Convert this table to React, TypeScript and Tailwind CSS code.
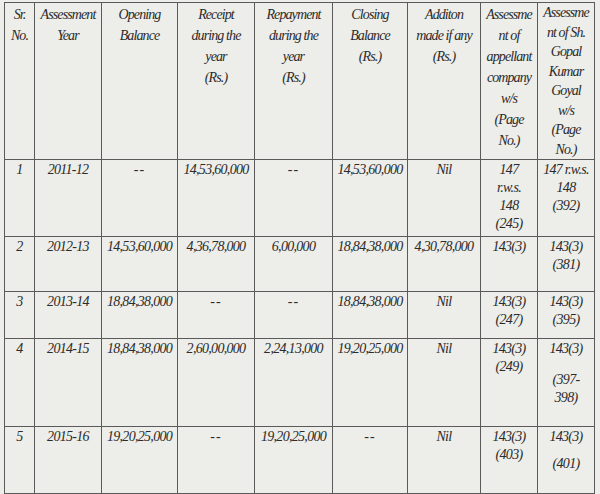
import React from 'react';

type Row = {
  sr: string;
  year: string;
  opening: string;
  receipt: string;
  repayment: string;
  closing: string;
  addition: string;
  company: React.ReactNode;
  goyal: React.ReactNode;
  height: string;
};

const rows: Row[] = [
  {
    sr: '1',
    year: '2011-12',
    opening: '--',
    receipt: '14,53,60,000',
    repayment: '--',
    closing: '14,53,60,000',
    addition: 'Nil',
    company: (
      <>
        147<br />r.w.s.<br />148<br />(245)
      </>
    ),
    goyal: (
      <>
        147 r.w.s.<br />148<br />(392)
      </>
    ),
    height: 'h-[77px]',
  },
  {
    sr: '2',
    year: '2012-13',
    opening: '14,53,60,000',
    receipt: '4,36,78,000',
    repayment: '6,00,000',
    closing: '18,84,38,000',
    addition: '4,30,78,000',
    company: '143(3)',
    goyal: (
      <>
        143(3)<br />(381)
      </>
    ),
    height: 'h-[55px]',
  },
  {
    sr: '3',
    year: '2013-14',
    opening: '18,84,38,000',
    receipt: '--',
    repayment: '--',
    closing: '18,84,38,000',
    addition: 'Nil',
    company: (
      <>
        143(3)<br />(247)
      </>
    ),
    goyal: (
      <>
        143(3)<br />(395)
      </>
    ),
    height: 'h-[47px]',
  },
  {
    sr: '4',
    year: '2014-15',
    opening: '18,84,38,000',
    receipt: '2,60,00,000',
    repayment: '2,24,13,000',
    closing: '19,20,25,000',
    addition: 'Nil',
    company: (
      <>
        143(3)<br />(249)
      </>
    ),
    goyal: (
      <>
        143(3)
        <div className="mt-[13px]">(397-</div>
        <div>398)</div>
      </>
    ),
    height: 'h-[88px]',
  },
  {
    sr: '5',
    year: '2015-16',
    opening: '19,20,25,000',
    receipt: '--',
    repayment: '19,20,25,000',
    closing: '--',
    addition: 'Nil',
    company: (
      <>
        143(3)<br />(403)
      </>
    ),
    goyal: (
      <>
        143(3)
        <div className="mt-[9px]">(401)</div>
      </>
    ),
    height: 'h-[67px]',
  },
];

const headers: React.ReactNode[] = [
  <>Sr.<br />No.</>,
  <>Assessment<br />Year</>,
  <>Opening<br />Balance</>,
  <>Receipt<br />during the<br />year<br />(Rs.)</>,
  <>Repayment<br />during the<br />year<br />(Rs.)</>,
  <>Closing<br />Balance<br />(Rs.)</>,
  <>Additon<br />made if any<br />(Rs.)</>,
  <>Assessme<br />nt of<br />appellant<br />company<br />w/s<br />(Page<br />No.)</>,
  <>Assessme<br />nt of Sh.<br />Gopal<br />Kumar<br />Goyal<br />w/s<br />(Page<br />No.)</>,
];

const widths = ['w-[30px]', 'w-[67px]', 'w-[76px]', 'w-[77px]', 'w-[78px]', 'w-[75px]', 'w-[73px]', 'w-[57px]', 'w-[57px]'];

const cell = 'border border-[#5a5a5a] align-top text-center px-0';

export default function App() {
  return (
    <div className="w-[600px] h-[494px] overflow-hidden bg-[#edede9] pl-[4px] pt-[2px] font-['Liberation_Serif',serif] italic text-[#2b2b2b]">
      <table className="table-fixed border-collapse w-[590px]">
        <colgroup>
          {widths.map((w, i) => (
            <col key={i} className={w} />
          ))}
        </colgroup>
        <thead>
          <tr className="h-[156px]">
            {headers.map((h, i) => (
              <th
                key={i}
                className={`${cell} font-normal text-[14px] tracking-[-0.9px] ${
                  i === 8 ? 'leading-[19.5px] pt-0' : 'leading-[21px] pt-[1px]'
                }`}
              >
                {h}
              </th>
            ))}
          </tr>
        </thead>
        <tbody>
          {rows.map((r) => (
            <tr key={r.sr} className={r.height}>
              {[r.sr, r.year, r.opening, r.receipt, r.repayment, r.closing, r.addition, r.company, r.goyal].map(
                (v, i) => (
                  <td
                    key={i}
                    className={`${cell} text-[14px] leading-[18px] pt-[1px] ${
                      v === '--' ? 'tracking-[1px]' : 'tracking-[-0.7px]'
                    }`}
                  >
                    {v}
                  </td>
                )
              )}
            </tr>
          ))}
        </tbody>
      </table>
    </div>
  );
}
